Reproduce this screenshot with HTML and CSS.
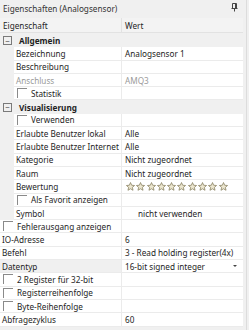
FILE: index.html
```html
<!DOCTYPE html>
<html lang="de">
<head>
<meta charset="utf-8">
<title>Eigenschaften (Analogsensor)</title>
<link rel="stylesheet" href="styles.css">
</head>
<body>

<div class="panel">
  <div class="title">
    <span>Eigenschaften (Analogsensor)</span>
    <svg class="pin" width="7" height="9" viewBox="0 0 7 9">
      <path d="M1.5 0.5h4v5h-4z M0.5 5.5h6 M3.5 5.5v3" fill="none" stroke="#444" stroke-width="1"/>
      <path d="M4.5 1v4" stroke="#444" stroke-width="1"/>
    </svg>
  </div>

  <div class="grid">
    <div class="row head">
      <div class="name">Eigenschaft</div>
      <div class="val">Wert</div>
    </div>

    <div class="row cat">
      <div class="name"><span class="box">&minus;</span>Allgemein</div>
    </div>
    <div class="row in">
      <div class="name">Bezeichnung</div>
      <div class="val">Analogsensor 1</div>
    </div>
    <div class="row in">
      <div class="name">Beschreibung</div>
      <div class="val"></div>
    </div>
    <div class="row in off">
      <div class="name">Anschluss</div>
      <div class="val">AMQ3</div>
    </div>
    <div class="row in">
      <div class="name"><span class="check"></span>Statistik</div>
      <div class="val"></div>
    </div>

    <div class="row cat">
      <div class="name"><span class="box">&minus;</span>Visualisierung</div>
    </div>
    <div class="row in">
      <div class="name"><span class="check"></span>Verwenden</div>
      <div class="val"></div>
    </div>
    <div class="row in">
      <div class="name">Erlaubte Benutzer lokal</div>
      <div class="val">Alle</div>
    </div>
    <div class="row in">
      <div class="name">Erlaubte Benutzer Internet</div>
      <div class="val">Alle</div>
    </div>
    <div class="row in">
      <div class="name">Kategorie</div>
      <div class="val">Nicht zugeordnet</div>
    </div>
    <div class="row in">
      <div class="name">Raum</div>
      <div class="val">Nicht zugeordnet</div>
    </div>
    <div class="row in">
      <div class="name">Bewertung</div>
      <div class="val stars" id="stars"></div>
    </div>
    <div class="row in">
      <div class="name"><span class="check"></span>Als Favorit anzeigen</div>
      <div class="val"></div>
    </div>
    <div class="row in">
      <div class="name">Symbol</div>
      <div class="val indent">nicht verwenden</div>
    </div>

    <div class="row">
      <div class="name"><span class="check"></span>Fehlerausgang anzeigen</div>
      <div class="val"></div>
    </div>
    <div class="row">
      <div class="name">IO-Adresse</div>
      <div class="val">6</div>
    </div>
    <div class="row">
      <div class="name">Befehl</div>
      <div class="val">3 - Read holding register(4x)</div>
    </div>
    <div class="row sel">
      <div class="name">Datentyp</div>
      <div class="val drop">16-bit signed integer<span class="arrow"></span></div>
    </div>
    <div class="row">
      <div class="name"><span class="check"></span>2 Register f&uuml;r 32-bit</div>
      <div class="val"></div>
    </div>
    <div class="row">
      <div class="name"><span class="check"></span>Registerreihenfolge</div>
      <div class="val"></div>
    </div>
    <div class="row">
      <div class="name"><span class="check"></span>Byte-Reihenfolge</div>
      <div class="val"></div>
    </div>
    <div class="row">
      <div class="name">Abfragezyklus</div>
      <div class="val">60</div>
    </div>
  </div>
</div>

<script>
  // ten empty rating stars
  var star = '<svg width="9" height="9" viewBox="0 0 10 10"><path d="M5 0.6l1.3 3 3.2.3-2.4 2.1.7 3.2L5 7.5 2.2 9.2l.7-3.2L.5 3.9l3.2-.3z" fill="#ece6cf" stroke="#8c8466" stroke-width="0.9" stroke-linejoin="round"/></svg>';
  document.getElementById("stars").innerHTML = star.repeat(10);
</script>

</body>
</html>
```

FILE: styles.css
```css
body {
  margin: 0;
  background-color: #f0f0f0;
  font-family: "Noto Sans", sans-serif;
  font-size: 8.2px;
  color: #1e1e1e;
}

.panel {
  width: 246px;
  height: 330px;
  border-right: 1px solid #dcdcdc;
}

.title {
  height: 17px;
  display: flex;
  align-items: center;
  justify-content: space-between;
  padding: 0 8px 1px 3px;
  color: #333;
}

.pin {
  margin-top: -2px;
}

.grid {
  margin-right: 3px;
}

.row {
  display: grid;
  grid-template-columns: 122px 1fr;
  height: 13.3px;
  background-color: #fff;
}

.name, .val {
  display: flex;
  align-items: center;
  white-space: nowrap;
  overflow: hidden;
  border-bottom: 1px solid #ebebeb;
  box-sizing: border-box;
}

.name {
  padding-left: 2px;
  border-right: 1px solid #ebebeb;
}

.val {
  padding-left: 3px;
}

.head {
  height: 15px;
  background-color: #f3f3f3;
  margin-bottom: 1px;
}

.head .name, .head .val {
  border-bottom: 1px solid #e2e2e2;
  padding-left: 3px;
}

.head .name {
  border-right: 1px solid #e2e2e2;
}

.cat {
  background-color: #f0f0f0;
  grid-template-columns: 1fr;
  font-weight: bold;
}

.cat .name {
  border: none;
  padding-left: 3px;
}

.box {
  width: 7px;
  height: 7px;
  border: 1px solid #7a7a7a;
  display: inline-flex;
  align-items: center;
  justify-content: center;
  font-weight: normal;
  font-size: 8px;
  line-height: 1;
  margin-right: 7px;
  color: #444;
}

.in {
  background-color: #f0f0f0;
}

.in .name {
  margin-left: 14px;
  background-color: #fff;
}

.in .val {
  background-color: #fff;
}

.off {
  color: #9a9a9a;
}

.check {
  width: 9px;
  height: 9px;
  border-top: 1px solid #8a8a8a;
  border-left: 1px solid #8a8a8a;
  margin: 0 4px 0 1px;
  flex: none;
}

.sel .name {
  background-color: #f0f0f0;
}

.stars {
  gap: 1.3px;
  padding-left: 4px;
}

.stars svg {
  flex: none;
}

.indent {
  padding-left: 16px;
}

.drop {
  justify-content: space-between;
  padding-right: 6px;
}

.arrow {
  width: 0;
  height: 0;
  border-left: 2px solid transparent;
  border-right: 2px solid transparent;
  border-top: 2px solid #444;
}
```
